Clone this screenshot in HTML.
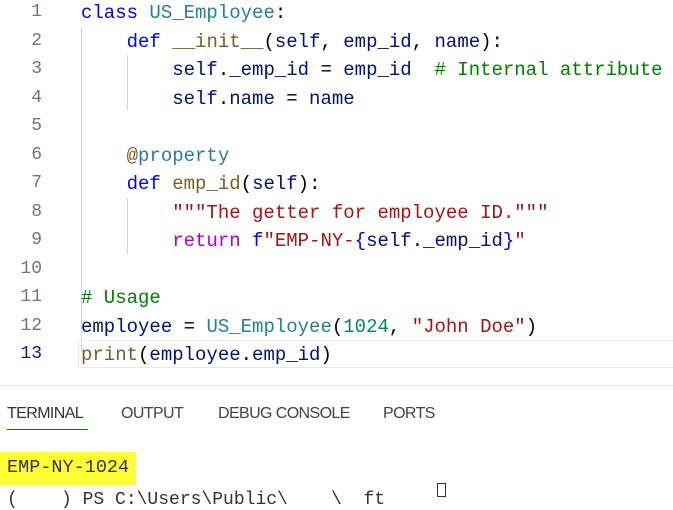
<!DOCTYPE html>
<html><head><style>
body{margin:0;width:673px;height:492px;overflow:hidden;background:#fff;font-family:"Liberation Mono",monospace;}
.ln{position:absolute;left:0;width:42px;text-align:right;font-size:18px;color:#6e7681;}
.cd{position:absolute;left:81px;font-size:19px;white-space:pre;color:#001080;}
.k{color:#0000ff}.c{color:#267f99}.s{color:#a31515}.g{color:#008000}.p{color:#af00db}.n{color:#098658}.f{color:#795e26}.b{color:#000}
.guide{position:absolute;width:1px;background:#d3d3d3}
.tab{position:absolute;white-space:nowrap}
</style></head><body>
<div class="guide" style="left:81px;top:27px;height:325px"></div>
<div class="guide" style="left:127px;top:55px;height:55px"></div>
<div class="guide" style="left:127px;top:198px;height:56px"></div>
<div style="position:absolute;left:78px;top:340px;width:600px;height:26px;border:1px solid #e8e8e8;border-right:none"></div>
<div class="ln" style="top:2px">1</div><div class="cd" style="top:2px"><span class="k">class</span> <span class="c">US_Employee</span><span class="b">:</span></div>
<div class="ln" style="top:31px">2</div><div class="cd" style="top:31px">    <span class="k">def</span> <span class="f">__init__</span><span class="b">(</span>self<span class="b">, </span>emp_id<span class="b">, </span>name<span class="b">):</span></div>
<div class="ln" style="top:59px">3</div><div class="cd" style="top:59px">        self<span class="b">.</span>_emp_id <span class="b">=</span> emp_id  <span class="g"># Internal attribute</span></div>
<div class="ln" style="top:88px">4</div><div class="cd" style="top:88px">        self<span class="b">.</span>name <span class="b">=</span> name</div>
<div class="ln" style="top:116px">5</div>
<div class="ln" style="top:145px">6</div><div class="cd" style="top:145px">    <span class="f">@</span><span class="c">property</span></div>
<div class="ln" style="top:173px">7</div><div class="cd" style="top:173px">    <span class="k">def</span> <span class="f">emp_id</span><span class="b">(</span>self<span class="b">):</span></div>
<div class="ln" style="top:202px">8</div><div class="cd" style="top:202px">        <span class="s">"""The getter for employee ID."""</span></div>
<div class="ln" style="top:230px">9</div><div class="cd" style="top:230px">        <span class="p">return</span> <span class="k">f</span><span class="s">"EMP-NY-</span><span class="k">{</span>self<span class="b">.</span>_emp_id<span class="k">}</span><span class="s">"</span></div>
<div class="ln" style="top:259px">10</div>
<div class="ln" style="top:287px">11</div><div class="cd" style="top:287px"><span class="g"># Usage</span></div>
<div class="ln" style="top:316px">12</div><div class="cd" style="top:316px">employee <span class="b">=</span> <span class="c">US_Employee</span><span class="b">(</span><span class="n">1024</span><span class="b">, </span><span class="s">"John Doe"</span><span class="b">)</span></div>
<div class="ln" style="top:344px;color:#0b216f">13</div><div class="cd" style="top:344px"><span class="f">print</span><span class="b">(</span>employee<span class="b">.</span>emp_id<span class="b">)</span></div>
<div style="position:absolute;left:0;top:385px;width:673px;height:1px;background:#e5e5e5"></div>
<div style="position:absolute;top:405px;left:7px;font-family:'Liberation Sans',sans-serif;font-size:16px;color:#424242;letter-spacing:-0.6px">
<span class="tab" style="left:0;color:#333">TERMINAL</span>
<span class="tab" style="left:114px">OUTPUT</span>
<span class="tab" style="left:211px">DEBUG CONSOLE</span>
<span class="tab" style="left:376px">PORTS</span></div>
<div style="position:absolute;left:7px;top:429px;width:81px;height:1px;background:#005fb8"></div>
<div style="position:absolute;left:0;top:452px;width:136px;height:33px;background:#ffff33"></div>
<div style="position:absolute;left:7px;top:457px;font-size:18.5px;color:#333">EMP-NY-1024</div>
<div style="position:absolute;left:7px;top:490px;font-size:18px;color:#333;white-space:pre">(    ) PS C:\Users\Public\    \  ft </div>
<div style="position:absolute;left:437px;top:483px;width:7px;height:12px;border:1px solid #333"></div>
</body></html>
